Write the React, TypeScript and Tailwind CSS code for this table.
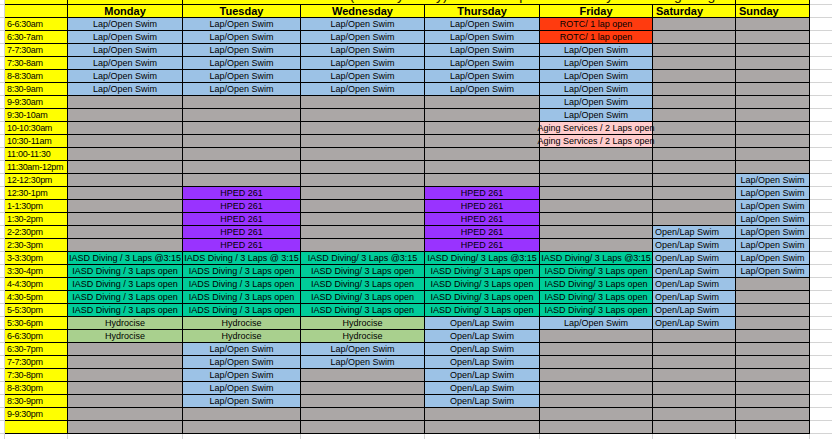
import React from 'react';

type Cell = { k: string; t: string } | null;

const BG: Record<string, string> = {
  blue: 'bg-[#9cc2e6]',
  red: 'bg-[#ff3b0f]',
  pink: 'bg-[#ffcccc]',
  purple: 'bg-[#9933ff]',
  green: 'bg-[#a9d08e]',
  teal: 'bg-[#00cc99]',
};

const lap: Cell = { k: 'blue', t: 'Lap/Open Swim' };
const open: Cell = { k: 'blue', t: 'Open/Lap Swim' };
const rotc: Cell = { k: 'red', t: 'ROTC/ 1 lap open' };
const aging: Cell = { k: 'pink', t: 'Aging Services / 2 Laps open' };
const hped: Cell = { k: 'purple', t: 'HPED 261' };
const hydro: Cell = { k: 'green', t: 'Hydrocise' };
const dive = (t: string): Cell => ({ k: 'teal', t });
const g = null;

// columna de horas + 7 dias
const rows: [string, Cell[]][] = [
  ['6-6:30am', [lap, lap, lap, lap, rotc, g, g]],
  ['6:30-7am', [lap, lap, lap, lap, rotc, g, g]],
  ['7-7:30am', [lap, lap, lap, lap, lap, g, g]],
  ['7:30-8am', [lap, lap, lap, lap, lap, g, g]],
  ['8-8:30am', [lap, lap, lap, lap, lap, g, g]],
  ['8:30-9am', [lap, lap, lap, lap, lap, g, g]],
  ['9-9:30am', [g, g, g, g, lap, g, g]],
  ['9:30-10am', [g, g, g, g, lap, g, g]],
  ['10-10:30am', [g, g, g, g, aging, g, g]],
  ['10:30-11am', [g, g, g, g, aging, g, g]],
  ['11:00-11:30', [g, g, g, g, g, g, g]],
  ['11:30am-12pm', [g, g, g, g, g, g, g]],
  ['12-12:30pm', [g, g, g, g, g, g, lap]],
  ['12:30-1pm', [g, hped, g, hped, g, g, lap]],
  ['1-1:30pm', [g, hped, g, hped, g, g, lap]],
  ['1:30-2pm', [g, hped, g, hped, g, g, lap]],
  ['2-2:30pm', [g, hped, g, hped, g, open, lap]],
  ['2:30-3pm', [g, hped, g, hped, g, open, lap]],
  ['3-3:30pm', [dive('IASD Diving / 3 Laps @3:15'), dive('IADS Diving / 3 Laps @ 3:15'), dive('IASD Diving/ 3 Laps @3:15'), dive('IASD Diving/ 3 Laps @3:15'), dive('IASD Diving/ 3 Laps @3:15'), open, lap]],
  ['3:30-4pm', [dive('IASD Diving / 3 Laps open'), dive('IADS Diving / 3 Laps open'), dive('IASD Diving/ 3 Laps open'), dive('IASD Diving/ 3 Laps open'), dive('IASD Diving/ 3 Laps open'), open, lap]],
  ['4-4:30pm', [dive('IASD Diving / 3 Laps open'), dive('IADS Diving / 3 Laps open'), dive('IASD Diving/ 3 Laps open'), dive('IASD Diving/ 3 Laps open'), dive('IASD Diving/ 3 Laps open'), open, g]],
  ['4:30-5pm', [dive('IASD Diving / 3 Laps open'), dive('IADS Diving / 3 Laps open'), dive('IASD Diving/ 3 Laps open'), dive('IASD Diving/ 3 Laps open'), dive('IASD Diving/ 3 Laps open'), open, g]],
  ['5-5:30pm', [dive('IASD Diving / 3 Laps open'), dive('IADS Diving / 3 Laps open'), dive('IASD Diving/ 3 Laps open'), dive('IASD Diving/ 3 Laps open'), dive('IASD Diving/ 3 Laps open'), open, g]],
  ['5:30-6pm', [hydro, hydro, hydro, open, lap, open, g]],
  ['6-6:30pm', [hydro, hydro, hydro, open, g, g, g]],
  ['6:30-7pm', [g, lap, lap, open, g, g, g]],
  ['7-7:30pm', [g, lap, lap, open, g, g, g]],
  ['7:30-8pm', [g, lap, g, open, g, g, g]],
  ['8-8:30pm', [g, lap, g, open, g, g, g]],
  ['8:30-9pm', [g, lap, g, open, g, g, g]],
  ['9-9:30pm', [g, g, g, g, g, g, g]],
  ['', [g, g, g, g, g, g, g]],
];

const days = ['Monday', 'Tuesday', 'Wednesday', 'Thursday', 'Friday', 'Saturday', 'Sunday'];

const COLS = 'grid-cols-[62px_114px_117px_123px_114px_112px_82px_73px]';

function ScheduleCell({ c, col }: { c: Cell; col: number }) {
  if (!c) return <div className="bg-[#aba7a6] h-[12px]" />;
  const wide = c.k === 'pink';
  return (
    <div
      className={`${BG[c.k]} h-[12px] leading-[12px] whitespace-nowrap flex ${
        col === 5 ? 'justify-start pl-[2px]' : 'justify-center'
      } ${wide ? 'relative z-10' : 'overflow-hidden'}`}
    >
      <span>{c.t}</span>
    </div>
  );
}

export default function App() {
  return (
    <div
      className="w-[832px] h-[439px] overflow-hidden bg-white flex text-black text-[9px] bg-[repeating-linear-gradient(to_bottom,transparent_0px,transparent_4px,#d4d4d4_4px,#d4d4d4_5px,transparent_5px,transparent_13px)]"
      style={{ fontFamily: '"Liberation Sans", Arial, sans-serif' }}
    >
      {/* margen izquierdo con linea gris */}
      <div className="w-[5px] h-full border-r border-[#d4d4d4] shrink-0" />

      <div className="flex flex-col w-[805px] shrink-0">
        <div className={`grid ${COLS} gap-px bg-black border-r border-b border-black`}>
          {/* fila del titulo, casi toda cortada */}
          <div className="bg-[#ffff00] h-[4px]" />
          <div className="bg-[#ffff00] h-[4px]" />
          <div className="col-span-5 bg-[#ffff00] h-[4px] overflow-hidden text-center">
            <div className="mt-[-12px] text-[14px] leading-[14px] whitespace-nowrap text-[#2a2400]">
              Natatorium Pool Schedule (January - May) Hours of Operation - Daily Swimming Program
            </div>
          </div>
          <div className="bg-[#ffff00] h-[4px]" />

          {/* encabezados */}
          <div className="bg-[#ffff00] h-[12px]" />
          {days.map((d, i) => (
            <div
              key={d}
              className={`bg-[#ffff00] h-[12px] leading-[12px] text-[11px] font-bold flex ${
                i >= 5 ? 'justify-start pl-[3px]' : 'justify-center'
              }`}
            >
              {d}
            </div>
          ))}

          {rows.map(([time, cells], i) => (
            <React.Fragment key={i}>
              <div className="bg-[#ffff00] h-[12px] leading-[12px] pl-[2px] tracking-[-0.3px] whitespace-nowrap overflow-hidden">
                {time}
              </div>
              {cells.map((c, j) => (
                <ScheduleCell key={j} c={c} col={j} />
              ))}
            </React.Fragment>
          ))}
        </div>

        {/* lineas de cuadricula bajo la tabla */}
        <div className={`grid ${COLS} gap-x-px bg-[#d4d4d4] border-r border-[#d4d4d4] h-[6px]`}>
          {days.concat(['t']).map((d) => (
            <div key={d} className="bg-white" />
          ))}
        </div>
      </div>

      <div className="flex-1" />
    </div>
  );
}
